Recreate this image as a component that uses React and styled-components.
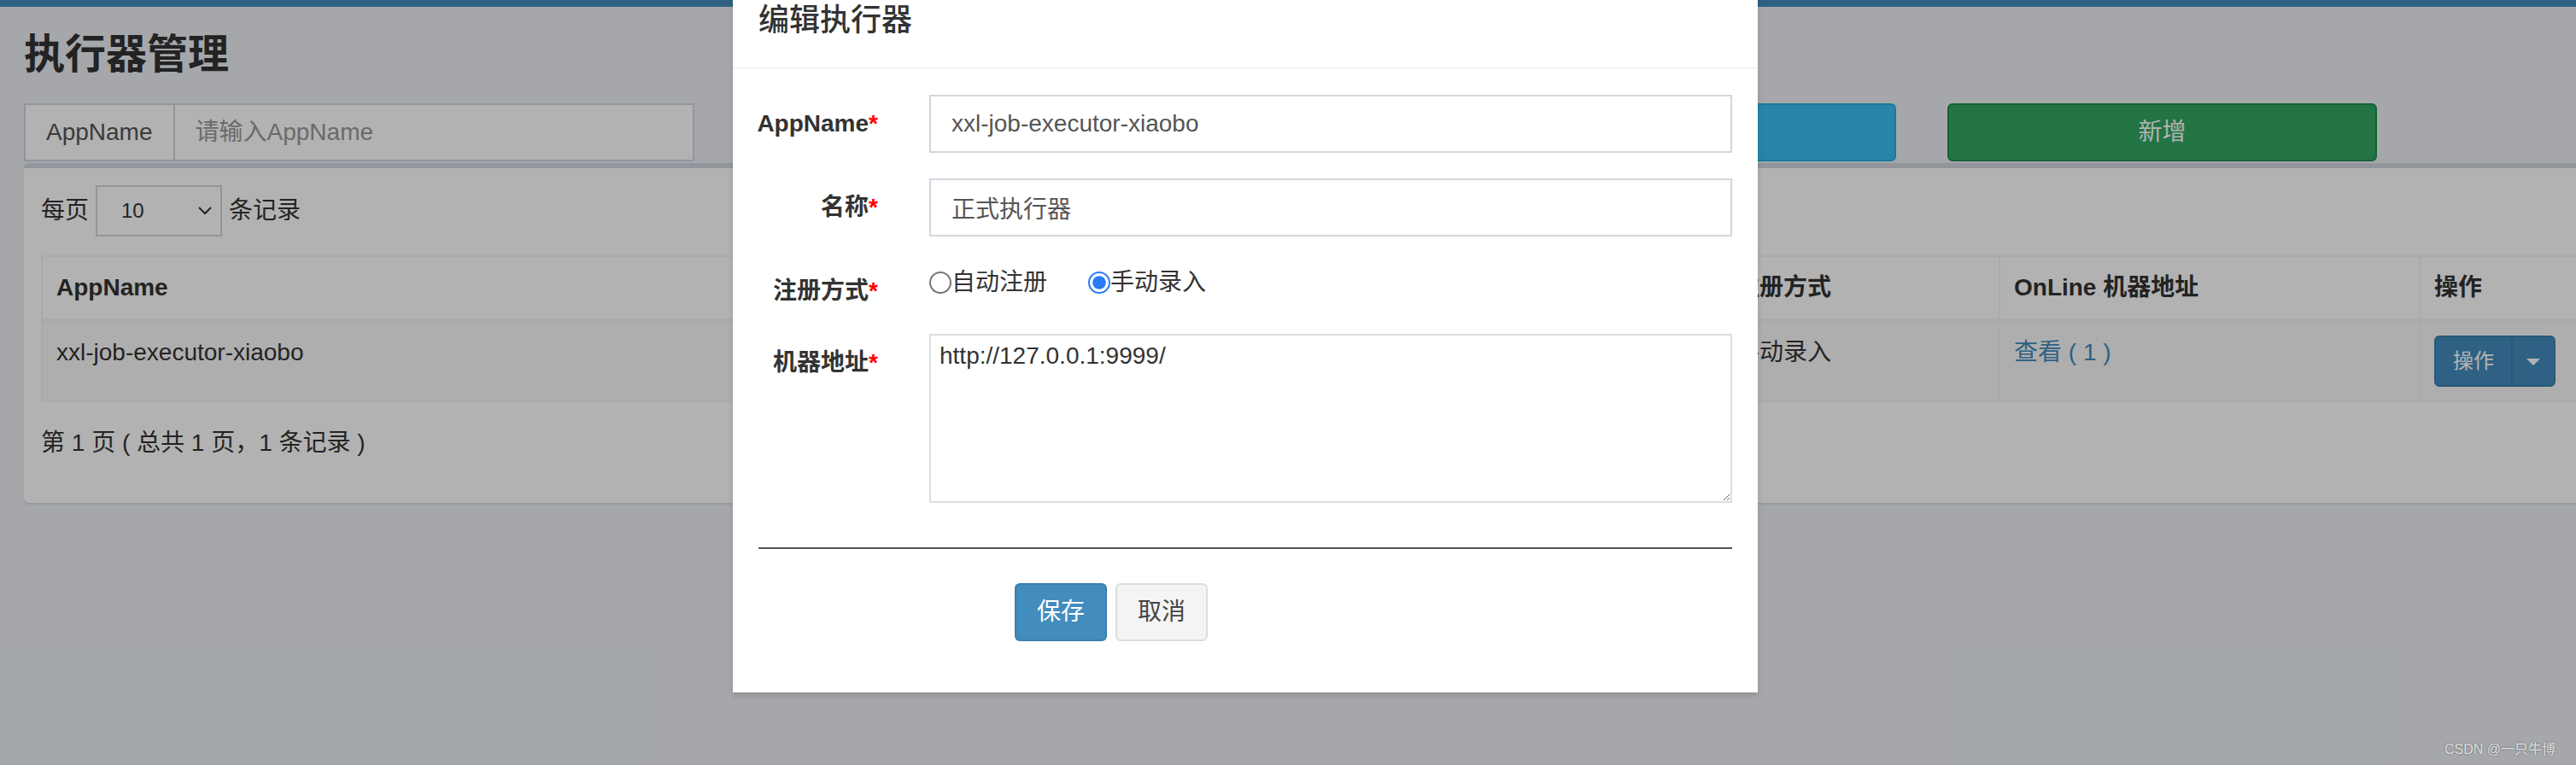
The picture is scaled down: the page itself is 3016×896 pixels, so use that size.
import React from "react";
import styled, { createGlobalStyle } from "styled-components";

const GlobalStyle = createGlobalStyle`
  html, body {
    margin: 0;
    padding: 0;
    overflow: hidden;
    background: #ecf0f5;
  }
  * {
    box-sizing: border-box;
  }
`;

const Page = styled.div`
  position: relative;
  zoom: 2;
  width: 1688px;
  height: 448px;
  overflow: hidden;
  background: #ecf0f5;
  font-family: "Liberation Sans", "Noto Sans CJK SC", sans-serif;
  font-size: 14px;
  line-height: 1.42857;
  color: #333;
`;

const TopBar = styled.div`
  height: 4px;
  background: #438cbe;
`;

const ContentHeader = styled.section`
  padding: 15px 15px 0 14px;
  h1 {
    margin: 0;
    font-size: 24px;
    font-weight: 600;
    line-height: 1.1;
  }
`;

const Content = styled.section`
  padding: 15px 15px 15px 14px;
`;

const Row = styled.div`
  display: flex;
  margin: 0 -15px;
`;

const Col = styled.div`
  flex: 0 0 ${(p) => (p.$span / 12) * 100}%;
  padding: 0 15px;
`;

const InputGroup = styled.div`
  display: flex;
  height: 34px;
`;

const Addon = styled.span`
  padding: 6px 12px;
  border: 1px solid #d2d6de;
  border-right: 0;
  background: #fff;
  color: #555;
  line-height: 20px;
  white-space: nowrap;
`;

const TextInput = styled.input`
  flex: 1;
  min-width: 0;
  height: 34px;
  border: 1px solid #d2d6de;
  padding: 6px 12px;
  font: inherit;
  color: #555;
  outline: none;
  &::placeholder {
    color: #999;
  }
`;

const palette = {
  info: ["#38bff0", "#22b0dc", "#fff"],
  success: ["#32a660", "#1f8d4c", "#fff"],
  primary: ["#438cbe", "#3a80ac", "#fff"],
  default: ["#f4f4f4", "#ddd", "#444"],
};

const Button = styled.button`
  display: ${(p) => (p.$block ? "block" : "inline-block")};
  width: ${(p) => (p.$block ? "100%" : "auto")};
  height: 34px;
  padding: 6px 12px;
  font: inherit;
  line-height: 20px;
  border-radius: 3px;
  background: ${(p) => palette[p.$variant][0]};
  border: 1px solid ${(p) => palette[p.$variant][1]};
  color: ${(p) => palette[p.$variant][2]};
  & + & {
    margin-left: 5px;
  }
`;

const Box = styled.div`
  margin-top: 1px;
  background: #fff;
  border-top: 3px solid #d2d6de;
  border-radius: 3px;
  box-shadow: 0 1px 1px rgba(0, 0, 0, 0.1);
  padding: 10px;
`;

const LengthRow = styled.div`
  display: flex;
  align-items: center;
  height: 30px;
`;

const SelectBox = styled.div`
  display: flex;
  align-items: center;
  justify-content: space-between;
  width: 74px;
  height: 30px;
  margin: 0 4px;
  padding: 0 5px 0 14px;
  border: 1px solid #d2d6de;
  font-size: 12px;
  color: #333;
`;

const Table = styled.table`
  width: 100%;
  margin-top: 11px;
  border-collapse: collapse;
  table-layout: fixed;
  border: 1px solid #f4f4f4;
  th,
  td {
    padding: 8px;
    border: 1px solid #f4f4f4;
    text-align: left;
    vertical-align: top;
    line-height: 20px;
    white-space: nowrap;
    overflow: hidden;
  }
  thead th {
    border-bottom-width: 2px;
    font-weight: bold;
  }
  tbody tr:nth-child(odd) {
    background: #f9f9f9;
  }
`;

const Link = styled.a`
  color: #438cbe;
  text-decoration: none;
`;

const BtnGroup = styled.div`
  display: inline-flex;
  height: 30px;
`;

const SmallBtn = styled.button`
  padding: 5px ${(p) => (p.$caret ? "8px" : "10px")};
  font: inherit;
  font-size: 12px;
  line-height: 18px;
  color: #fff;
  background: #438cbe;
  border: 1px solid #3a80ac;
  border-radius: ${(p) => (p.$caret ? "0 3px 3px 0" : "3px 0 0 3px")};
  margin-left: ${(p) => (p.$caret ? "-1px" : "0")};
`;

const Caret = styled.span`
  display: inline-block;
  width: 0;
  height: 0;
  vertical-align: middle;
  border-top: 4px solid #fff;
  border-left: 4px solid transparent;
  border-right: 4px solid transparent;
`;

const InfoRow = styled.div`
  height: 43px;
  margin-top: 6px;
  padding-top: 8px;
  line-height: 20px;
`;

const Backdrop = styled.div`
  position: absolute;
  inset: 0;
  background: rgba(0, 0, 0, 0.3);
`;

const Modal = styled.div`
  position: absolute;
  left: 429px;
  top: -16px;
  width: 600px;
  background: #fff;
  box-shadow: 0 2px 3px rgba(0, 0, 0, 0.125);
`;

const ModalHeader = styled.div`
  padding: 15px;
  border-bottom: 1px solid #f4f4f4;
  h4 {
    margin: 0;
    font-size: 18px;
    font-weight: 500;
    line-height: 1.42857;
  }
`;

const ModalBody = styled.div`
  padding: 15px;
`;

const FormGroup = styled.div`
  display: flex;
  margin: 0 -15px 15px;
`;

const ControlLabel = styled.label`
  flex: 0 0 100px;
  min-width: 0;
  display: flex;
  justify-content: flex-end;
  align-items: flex-start;
  padding: 7px 15px 0;
  font-weight: bold;
  line-height: 20px;
  white-space: nowrap;
`;

const Req = styled.span`
  color: red;
`;

const Control = styled.div`
  flex: 0 0 ${(p) => (p.$offset ? "350px" : "500px")};
  padding: 0 15px;
  margin-left: ${(p) => (p.$offset ? "150px" : "0")};
`;

const FormInput = styled.input`
  display: block;
  width: 100%;
  height: 34px;
  padding: 6px 12px;
  border: 1px solid #d2d6de;
  font: inherit;
  color: #555;
  outline: none;
`;

const RadioLine = styled.div`
  padding-top: 2px;
  line-height: 20px;
  display: flex;
  align-items: center;
`;

const RadioLabel = styled.label`
  display: inline-flex;
  align-items: center;
  margin-right: 24px;
  input {
    margin: 0;
    width: 13px;
    height: 13px;
    accent-color: #2b7bf5;
  }
`;

const TextArea = styled.textarea`
  display: block;
  width: 100%;
  height: 99px;
  padding: 2px 5px;
  border: 1px solid #ddd;
  font: inherit;
  line-height: 20px;
  color: #333;
  outline: none;
`;

const Divider = styled.hr`
  margin: 26px 0 20px;
  border: 0;
  border-top: 1px solid #555;
`;

const Watermark = styled.div`
  position: absolute;
  left: 1431px;
  top: 435px;
  font-size: 8px;
  line-height: 1;
  color: rgba(255, 255, 255, 0.8);
  text-shadow: 0 0 1px rgba(0, 0, 0, 0.5);
  white-space: nowrap;
`;

const Chevron = () => (
  <svg width="8" height="5" viewBox="0 0 8 5">
    <path d="M0.5 0.5 L4 4 L7.5 0.5" fill="none" stroke="#333" strokeWidth="1" />
  </svg>
);

const App = () => {
  return (
    <Page>
      <GlobalStyle />
      <TopBar />
      <ContentHeader>
        <h1>执行器管理</h1>
      </ContentHeader>
      <Content>
        <Row>
          <Col $span={3}>
            <InputGroup>
              <Addon>AppName</Addon>
              <TextInput placeholder="请输入AppName" />
            </InputGroup>
          </Col>
          <Col $span={3}>
            <InputGroup>
              <Addon>名称</Addon>
              <TextInput placeholder="请输入名称" />
            </InputGroup>
          </Col>
          <Col $span={2}>
            <Button $block $variant="info">搜索</Button>
          </Col>
          <Col $span={2}>
            <Button $block $variant="success">新增</Button>
          </Col>
        </Row>
        <Box>
          <LengthRow>
            每页
            <SelectBox>
              <span>10</span>
              <Chevron />
            </SelectBox>
            条记录
          </LengthRow>
          <Table>
            <colgroup>
              <col style={{ width: 415 }} />
              <col style={{ width: 568 }} />
              <col style={{ width: 163 }} />
              <col style={{ width: 246 }} />
              <col style={{ width: 246 }} />
            </colgroup>
            <thead>
              <tr>
                <th>AppName</th>
                <th>名称</th>
                <th>注册方式</th>
                <th>OnLine 机器地址</th>
                <th>操作</th>
              </tr>
            </thead>
            <tbody>
              <tr>
                <td>xxl-job-executor-xiaobo</td>
                <td>正式执行器</td>
                <td>手动录入</td>
                <td>
                  <Link href="#">查看 ( 1 )</Link>
                </td>
                <td>
                  <BtnGroup>
                    <SmallBtn>操作</SmallBtn>
                    <SmallBtn $caret>
                      <Caret />
                    </SmallBtn>
                  </BtnGroup>
                </td>
              </tr>
            </tbody>
          </Table>
          <InfoRow>第 1 页 ( 总共 1 页，1 条记录 )</InfoRow>
        </Box>
      </Content>

      <Backdrop />
      <Modal>
        <ModalHeader>
          <h4>编辑执行器</h4>
        </ModalHeader>
        <ModalBody>
          <FormGroup>
            <ControlLabel>
              AppName<Req>*</Req>
            </ControlLabel>
            <Control>
              <FormInput defaultValue="xxl-job-executor-xiaobo" />
            </Control>
          </FormGroup>
          <FormGroup>
            <ControlLabel>
              名称<Req>*</Req>
            </ControlLabel>
            <Control>
              <FormInput defaultValue="正式执行器" />
            </Control>
          </FormGroup>
          <FormGroup>
            <ControlLabel>
              注册方式<Req>*</Req>
            </ControlLabel>
            <Control>
              <RadioLine>
                <RadioLabel>
                  <input type="radio" name="addressType" value="0" />
                  自动注册
                </RadioLabel>
                <RadioLabel>
                  <input type="radio" name="addressType" value="1" defaultChecked />
                  手动录入
                </RadioLabel>
              </RadioLine>
            </Control>
          </FormGroup>
          <FormGroup>
            <ControlLabel>
              机器地址<Req>*</Req>
            </ControlLabel>
            <Control>
              <TextArea defaultValue="http://127.0.0.1:9999/" />
            </Control>
          </FormGroup>
          <Divider />
          <FormGroup>
            <Control $offset>
              <Button $variant="primary">保存</Button>
              <Button $variant="default">取消</Button>
            </Control>
          </FormGroup>
        </ModalBody>
      </Modal>
      <Watermark>CSDN @一只牛博</Watermark>
    </Page>
  );
};

export default App;
